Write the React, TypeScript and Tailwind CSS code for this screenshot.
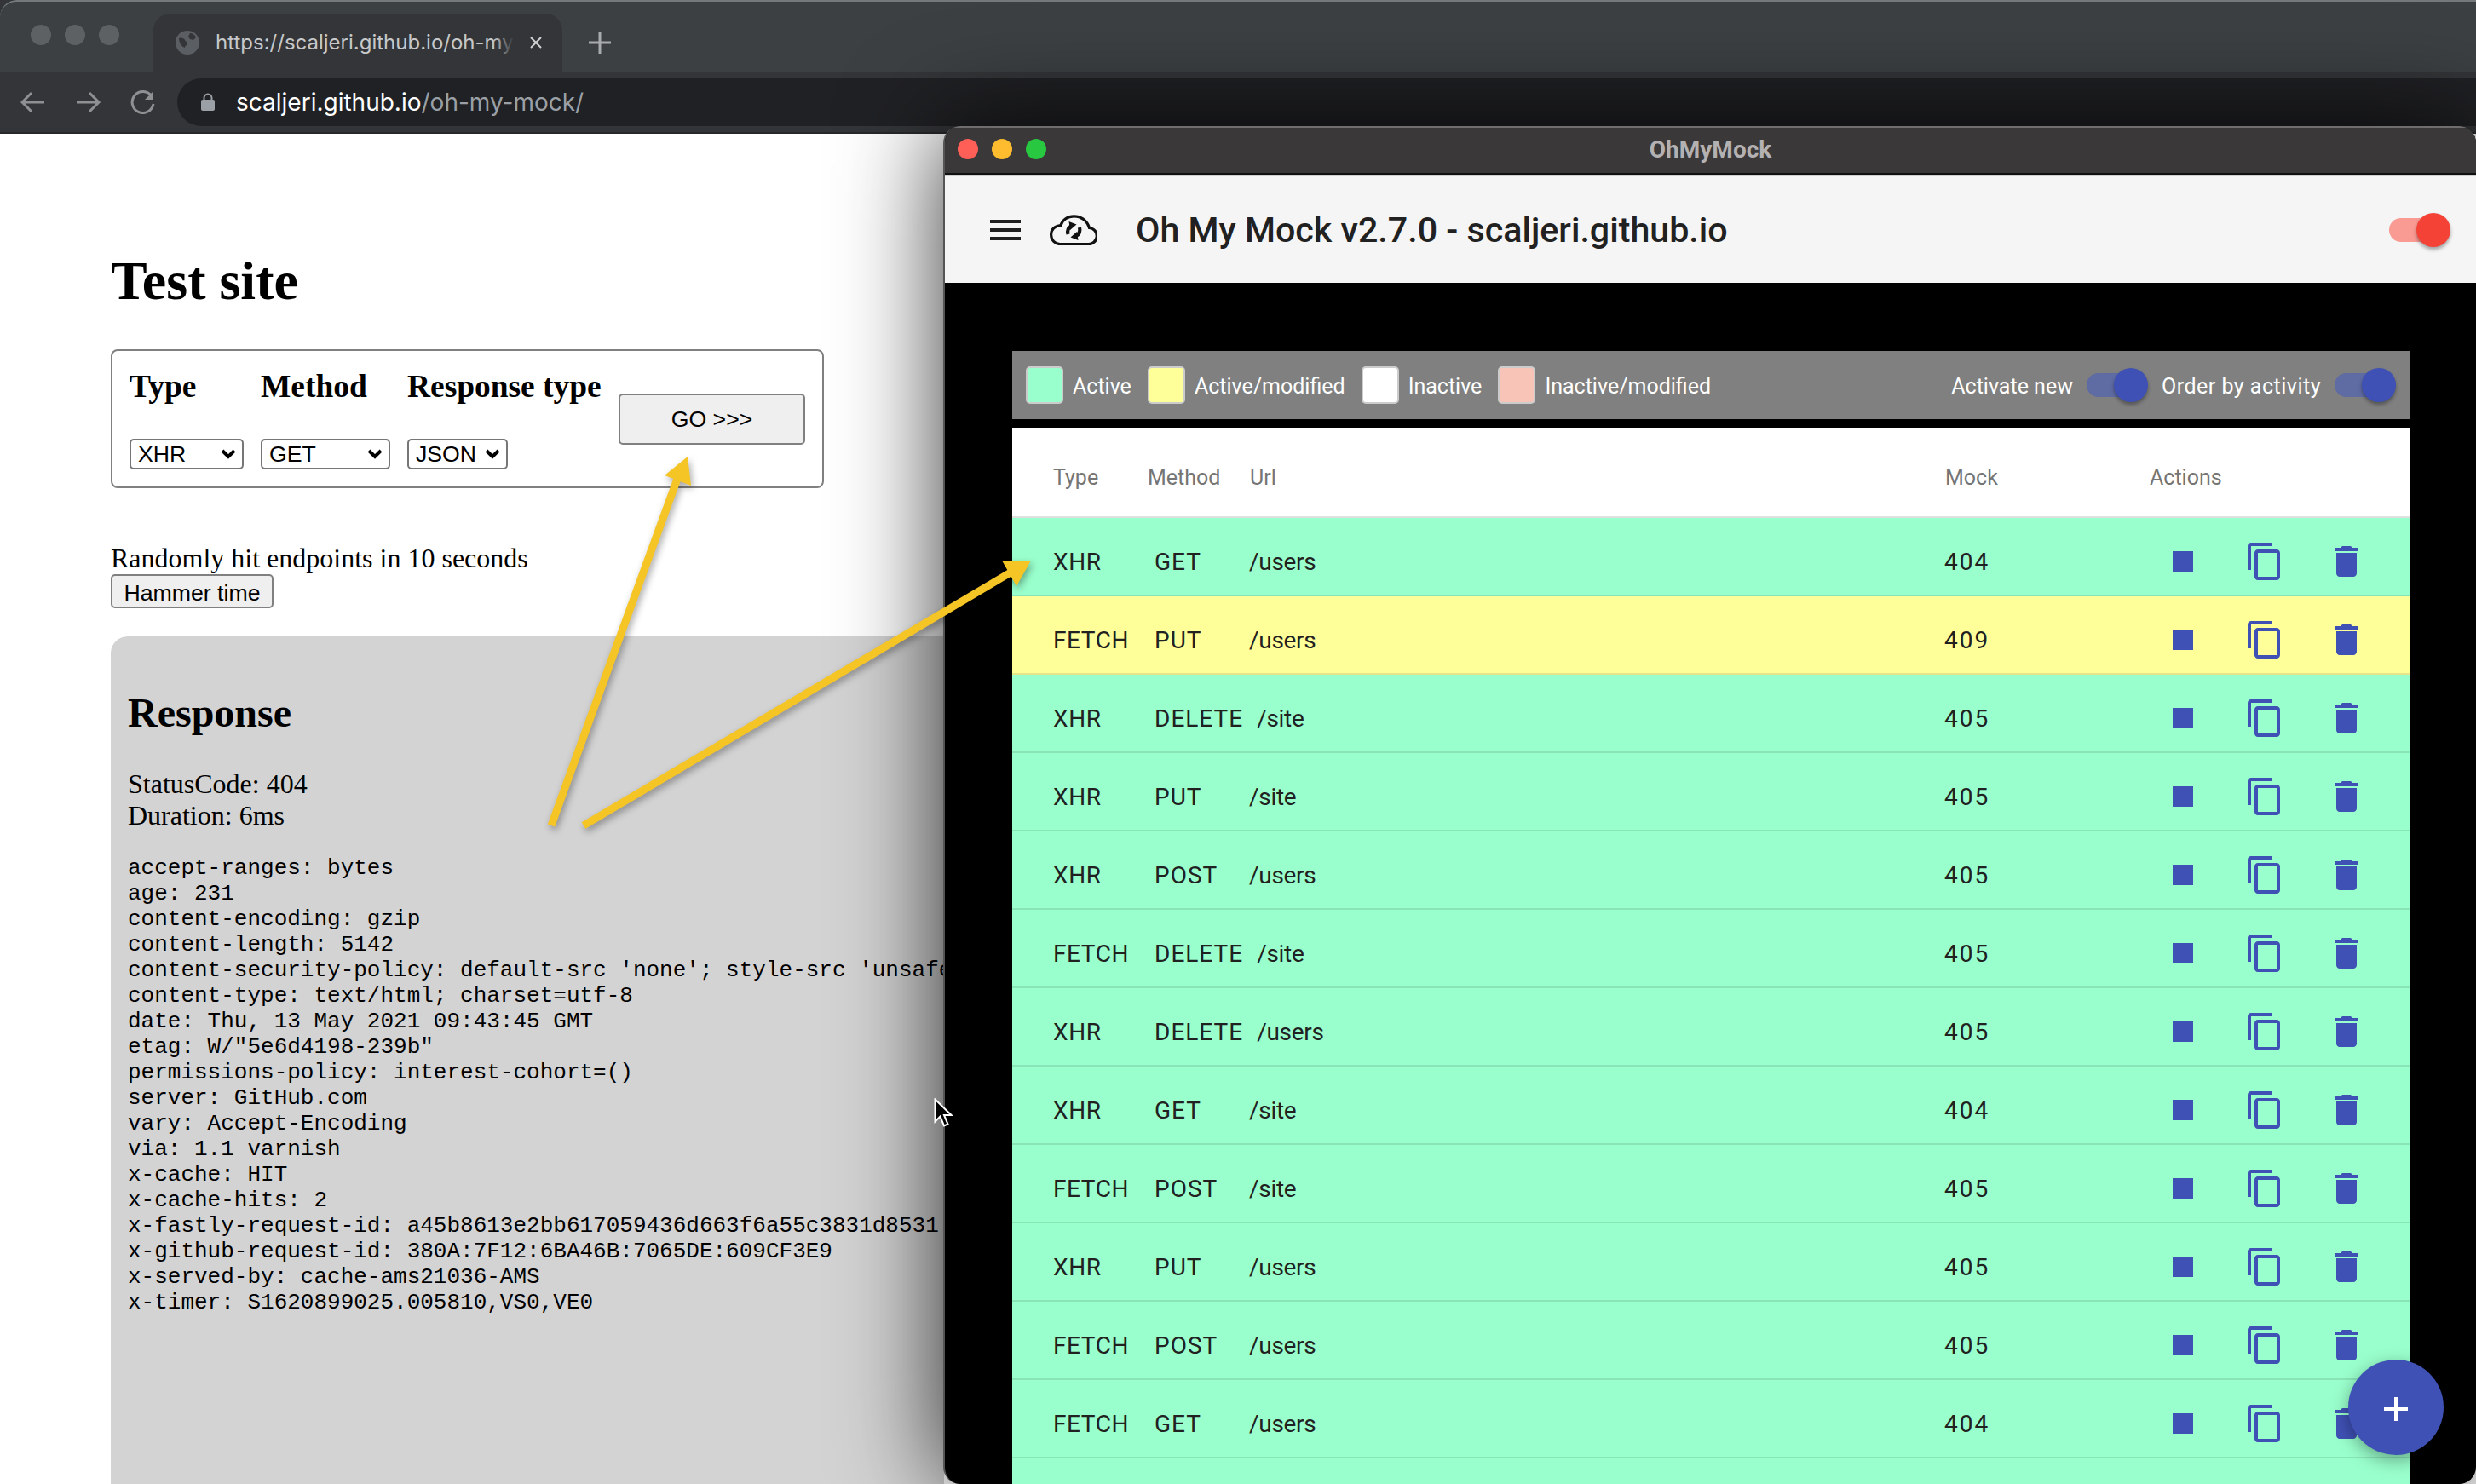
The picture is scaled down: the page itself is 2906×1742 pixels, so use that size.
const headers = `accept-ranges: bytes
age: 231
content-encoding: gzip
content-length: 5142
content-security-policy: default-src 'none'; style-src 'unsafe
content-type: text/html; charset=utf-8
date: Thu, 13 May 2021 09:43:45 GMT
etag: W/"5e6d4198-239b"
permissions-policy: interest-cohort=()
server: GitHub.com
vary: Accept-Encoding
via: 1.1 varnish
x-cache: HIT
x-cache-hits: 2
x-fastly-request-id: a45b8613e2bb617059436d663f6a55c3831d8531
x-github-request-id: 380A:7F12:6BA46B:7065DE:609CF3E9
x-served-by: cache-ams21036-AMS
x-timer: S1620899025.005810,VS0,VE0`

const rows = [
  ["XHR", "GET", "/users", "404"],
  ["FETCH", "PUT", "/users", "409"],
  ["XHR", "DELETE", "/site", "405"],
  ["XHR", "PUT", "/site", "405"],
  ["XHR", "POST", "/users", "405"],
  ["FETCH", "DELETE", "/site", "405"],
  ["XHR", "DELETE", "/users", "405"],
  ["XHR", "GET", "/site", "404"],
  ["FETCH", "POST", "/site", "405"],
  ["XHR", "PUT", "/users", "405"],
  ["FETCH", "POST", "/users", "405"],
  ["FETCH", "GET", "/users", "404"],
]

function MatIcon({ d, className }: { d: string; className?: string }) {
  return (
    <svg viewBox="0 0 24 24" className={className ?? "w-12 h-12 fill-[#3f51b5] shrink-0"}>
      <path d={d} />
    </svg>
  )
}

function FakeSelect({ label, width }: { label: string; width: string }) {
  return (
    <div className={`h-9 border-2 border-[#767676] rounded-[5px] bg-white pl-[8px] pr-[7px] flex items-center justify-between text-[26.67px] font-['Liberation_Sans',sans-serif] ${width}`}>
      <span>{label}</span>
      <svg viewBox="0 0 18 12" className="w-[18px] h-3 fill-none stroke-black stroke-[4]">
        <path d="M2 2l7 7 7-7" />
      </svg>
    </div>
  )
}

function Toggle({ track, thumb }: { track: string; thumb: string }) {
  return (
    <div className={`relative w-[72px] h-7 rounded-full ${track}`}>
      <div className={`absolute right-0 -top-1.5 w-10 h-10 rounded-full shadow-[0_3px_4px_rgba(0,0,0,0.35)] ${thumb}`} />
    </div>
  )
}

function Legend({ color, label }: { color: string; label: string }) {
  return (
    <div className="flex items-center gap-[11px]">
      <div className={`w-11 h-11 rounded-[5px] border-2 border-[#cccccc] ${color}`} />
      <span className="pt-[3px]">{label}</span>
    </div>
  )
}

function BrowserChrome() {
  return (
    <div className="h-[157px] shrink-0 bg-[#333538] border-b-2 border-[#27282a] font-['Inter',sans-serif]">
      <div className="h-[84px] bg-[#3c4043] border-t-2 border-[#74787b] rounded-tl-[20px] flex">
        <div className="w-[180px] flex items-center gap-4 pl-9 pb-[4px]">
          <div className="w-6 h-6 rounded-full bg-[#5d6164]" />
          <div className="w-6 h-6 rounded-full bg-[#5d6164]" />
          <div className="w-6 h-6 rounded-full bg-[#5d6164]" />
        </div>
        <div className="mt-[14px] w-[480px] bg-[#333538] rounded-t-[20px] flex items-center pl-[26px] text-[#c6c8ca] text-[24px]">
          <svg viewBox="0 0 28 28" className="w-7 h-7 shrink-0">
            <circle cx="14" cy="14" r="14" fill="#5b5e62" />
            <path d="M4 9c3-1 6 0 7 2s3 2 3 4-3 2-3 5c-3-1-5-3-6-6s-1-4-1-5zM17 3c3 0 6 2 7 5l-3 3-4-1-2-3z" fill="#333538" />
          </svg>
          <div className="relative w-[350px] ml-[19px] overflow-hidden whitespace-nowrap">
            https://scaljeri.github.io/oh-my-mock/
            <div className="absolute right-0 top-0 bottom-0 w-6 bg-gradient-to-r from-transparent to-[#333538]" />
          </div>
          <svg viewBox="0 0 16 16" className="w-4 h-4 ml-[18px] stroke-[#d0d2d4] stroke-2 shrink-0">
            <path d="M2 2l12 12M14 2L2 14" />
          </svg>
        </div>
        <svg viewBox="0 0 28 28" className="w-7 h-7 ml-[30px] mt-[34px] stroke-[#a9abad] stroke-[3]">
          <path d="M14 1v26M1 14h26" />
        </svg>
      </div>
      <div className="flex items-center h-[71px]">
        <svg viewBox="0 0 160 28" className="w-[160px] h-7 ml-[24px] shrink-0 fill-none stroke-[#8e9092] stroke-[3]">
          <path d="M28 14H3M13 3L2 14l11 11M66 14h25M81 3l11 11-11 11" />
          <path d="M154 7a12.500 12.500 0 1 0 2 9" />
          <path d="M156 1v10h-10z" fill="#8e9092" stroke="none" />
        </svg>
        <div className="ml-[24px] flex-1 h-14 bg-[#202124] rounded-l-full flex items-center pl-7 text-[28px] text-white">
          <svg viewBox="0 0 16 21" className="w-4 h-[21px] shrink-0">
            <path d="M3.500 9V6a4.500 4.500 0 0 1 9 0v3" fill="none" stroke="#9aa0a6" strokeWidth="2" />
            <rect y="8" width="16" height="13" rx="2" fill="#9aa0a6" />
          </svg>
          <span className="ml-[25px]">scaljeri.github.io</span>
          <span className="text-[#9aa0a6]">/oh-my-mock/</span>
        </div>
      </div>
    </div>
  )
}

function TestSite() {
  return (
    <div className="flex-1 overflow-hidden bg-white pl-[130px] font-['Liberation_Serif',serif] text-black">
      <h1 className="mt-[136px] text-[64px] leading-[74px] font-bold">Test site</h1>
      <div className="mt-[43px] w-[837px] h-[163px] border-2 border-[#808080] rounded-[8px] pl-5 pt-5 flex gap-5">
        <div className="w-[134px]">
          <h3 className="text-[37.44px] leading-[43px] font-bold">Type</h3>
          <div className="mt-10"><FakeSelect label="XHR" width="w-[134px]" /></div>
        </div>
        <div className="w-[152px]">
          <h3 className="text-[37.44px] leading-[43px] font-bold">Method</h3>
          <div className="mt-10"><FakeSelect label="GET" width="w-[152px]" /></div>
        </div>
        <div className="w-[228px]">
          <h3 className="text-[37.44px] leading-[43px] font-bold whitespace-nowrap">Response type</h3>
          <div className="mt-10"><FakeSelect label="JSON" width="w-[118px]" /></div>
        </div>
        <button className="mt-[30px] w-[219px] h-[60px] bg-[#efefef] border-2 border-[#808080] rounded-[5px] text-[26.67px] font-['Liberation_Sans',sans-serif]">
          GO &gt;&gt;&gt;
        </button>
      </div>
      <p className="mt-16 text-[32px] leading-[37px]">Randomly hit endpoints in 10 seconds</p>
      <button className="w-[191px] h-10 bg-[#efefef] border-2 border-[#808080] rounded-[5px] text-[26.67px] font-['Liberation_Sans',sans-serif]">
        Hammer time
      </button>
      <div className="mt-[33px] w-[978px] h-[1100px] bg-[#d3d3d3] rounded-l-[20px] pl-5 pt-[62px]">
        <h2 className="text-[48px] leading-[55px] font-bold">Response</h2>
        <p className="mt-[38px] text-[32px] leading-[37px]">StatusCode: 404</p>
        <p className="text-[32px] leading-[37px]">Duration: 6ms</p>
        <pre className="mt-7 w-fit text-[26px] leading-[30px] font-['Liberation_Mono',monospace]">{headers}</pre>
      </div>
    </div>
  )
}

function OhMyMock() {
  return (
    <div className="absolute left-[1107px] top-[148px] w-[1799px] h-[1594px] rounded-[20px] overflow-hidden bg-black border-l-2 border-[#555555] shadow-[0_0_120px_rgba(0,0,0,0.8)] font-['Roboto',sans-serif] flex flex-col">
      <div className="relative h-[57px] shrink-0 bg-[#3a3839] border-t-2 border-[#6f6d6e] border-b-2 border-b-[#111111] flex items-center justify-center text-[28px] font-bold text-[#b3b1b2]">
        <div className="absolute left-[15px] top-[13px] flex gap-4">
          <div className="w-6 h-6 rounded-full bg-[#ff5f57]" />
          <div className="w-6 h-6 rounded-full bg-[#febc2e]" />
          <div className="w-6 h-6 rounded-full bg-[#28c840]" />
        </div>
        <span className="-translate-y-px">OhMyMock</span>
      </div>

      <div className="h-[127px] shrink-0 bg-[#f5f5f5] border-t-2 border-[#cfcfcf] flex items-center pl-[47px] pr-[30px]">
        <MatIcon d="M3 18h18v-2H3v2zm0-5h18v-2H3v2zm0-7v2h18V6H3z" className="w-12 h-12 fill-[#1f1f1f] shrink-0" />
        <svg viewBox="0 0 56 36" className="w-14 h-9 ml-7 shrink-0 fill-none stroke-[#111111]">
          <path strokeWidth="3.200" d="M12 34.500h33a9.500 9.500 0 0 0 1.500-19C44 7 37 1.800 28.500 1.800 21 1.800 15 6 13 12.500 6 13 1.600 17.500 1.600 23.500c0 6 4.400 11 10.400 11z" />
          <path strokeWidth="4.200" d="M21.500 23c-1-4 .5-8 4-10M35 15c1 4-.5 8-4 10" />
          <path className="fill-[#111111]" stroke="none" d="M22.500 8l9 3.500-7.500 6.500zM33.500 30l-9-3.500 7.500-6.500z" />
        </svg>
        <span className="ml-[45px] pt-[3px] text-[41.2px] font-medium text-[#212121] whitespace-nowrap">Oh My Mock v2.7.0 - scaljeri.github.io</span>
        <div className="ml-auto"><Toggle track="bg-[#f99a93]" thumb="bg-[#f44336]" /></div>
      </div>

      <div className="flex-1 pl-[79px] pr-[78px] pt-20 min-h-0">
        <div className="h-20 bg-[#808080] flex items-center gap-[19px] pl-4 pr-4 text-[25px] text-white">
          <Legend color="bg-[#99ffcc]" label="Active" />
          <Legend color="bg-[#ffff99]" label="Active/modified" />
          <Legend color="bg-white" label="Inactive" />
          <Legend color="bg-[#f8c4b8]" label="Inactive/modified" />
          <div className="ml-auto flex items-center gap-4">
            <span className="pt-[3px]">Activate new</span>
            <Toggle track="bg-[#5f6ba3]" thumb="bg-[#3f51b5]" />
            <span className="pt-[3px] tracking-[0.5px]">Order by activity</span>
            <Toggle track="bg-[#5f6ba3]" thumb="bg-[#3f51b5]" />
          </div>
        </div>

        <div className="mt-2.5 h-[106px] bg-white border-b-2 border-[#e0e0e0] flex items-center pt-[13px] pl-12 text-[25px] text-[#757575]">
          <span className="w-[111px]">Type</span>
          <span className="w-[120px]">Method</span>
          <span className="flex-1">Url</span>
          <span className="w-[240px]">Mock</span>
          <span className="w-[305px]">Actions</span>
        </div>

        {rows.map(([type, method, url, mock]) => (
          <div
            key={type + method + url}
            className={`h-[92px] border-b-2 border-black/10 flex items-center pt-3 pl-12 text-[28px] text-[#212121] ${mock === "409" ? "bg-[#ffff99]" : "bg-[#99ffcc]"}`}
          >
            <span className="w-[119px] pt-0.5 tracking-[0.6px]">{type}</span>
            <span className="min-w-[111px] pr-4 pt-0.5 tracking-[1px]">{method}</span>
            <span className="flex-1 pt-0.5 tracking-[-0.3px]">{url}</span>
            <span className="w-[256px] pt-0.5 tracking-[2px]">{mock}</span>
            <div className="w-[290px] flex gap-12">
              <MatIcon d="M6 6h12v12H6z" />
              <MatIcon d="M16 1H4c-1.100 0-2 .9-2 2v14h2V3h12V1zm3 4H8c-1.100 0-2 .9-2 2v14c0 1.100.9 2 2 2h11c1.100 0 2-.9 2-2V7c0-1.100-.9-2-2-2zm0 16H8V7h11v14z" />
              <MatIcon d="M6 19c0 1.100.9 2 2 2h8c1.100 0 2-.9 2-2V7H6v12zM19 4h-3.500l-1-1h-5l-1 1H5v2h14V4z" />
            </div>
          </div>
        ))}
        <div className="h-[40px] bg-[#99ffcc]" />
      </div>

      <button className="absolute right-[38px] bottom-[34px] w-28 h-28 rounded-full bg-[#3f51b5] shadow-[0_6px_20px_rgba(0,0,0,0.35)] flex items-center justify-center pt-1">
        <MatIcon d="M19 13h-6v6h-2v-6H5v-2h6V5h2v6h6v2z" className="w-12 h-12 fill-white" />
      </button>
    </div>
  )
}

export default function App() {
  return (
    <div className="relative w-[2906px] h-[1742px] overflow-hidden flex flex-col bg-white">
      <BrowserChrome />
      <TestSite />
      <OhMyMock />

      {/* annotation arrows drawn on top of the screenshot */}
      <svg viewBox="0 0 2906 1742" className="absolute inset-0 w-[2906px] h-[1742px] pointer-events-none drop-shadow-[2px_4px_4px_rgba(0,0,0,0.35)]">
        <path d="M647 969L795 562M685 969L1186 672" stroke="#f5c526" strokeWidth="9" fill="none" />
        <path d="M807 536L780 558L811 570zM1210 658L1176 658L1193 688z" fill="#f5c526" />
      </svg>

      {/* mouse pointer */}
      <svg viewBox="0 0 22 34" className="absolute left-[1096px] top-[1289px] w-[22px] h-[34px]">
        <path d="M1.500 1.500v26l6-6 4.500 11 4.500-2-4.500-10.500h8.500z" fill="#000" stroke="#fff" strokeWidth="2" />
      </svg>
    </div>
  )
}
